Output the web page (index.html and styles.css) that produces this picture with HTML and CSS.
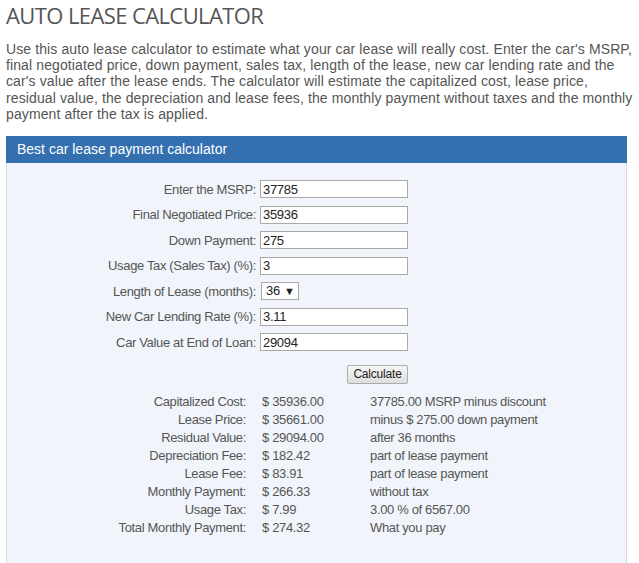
FILE: index.html
```html
<!DOCTYPE html>
<html lang="en">
<head>
    <meta charset="UTF-8">
    <title>Auto Lease Calculator</title>
    <link rel="stylesheet" href="styles.css">
</head>
<body>
    <h1 class="title">AUTO LEASE CALCULATOR</h1>
    <p class="intro">Use this auto lease calculator to estimate what your car lease will really cost. Enter the car's MSRP, final negotiated price, down payment, sales tax, length of the lease, new car lending rate and the car's value after the lease ends. The calculator will estimate the capitalized cost, lease price, residual value, the depreciation and lease fees, the monthly payment without taxes and the monthly payment after the tax is applied.</p>

    <div class="panel">
        <div class="panel-head">Best car lease payment calculator</div>
        <div class="panel-body">
            <div class="form">
                <label for="msrp">Enter the MSRP:</label>
                <input type="text" id="msrp" value="37785">
                <label for="price">Final Negotiated Price:</label>
                <input type="text" id="price" value="35936">
                <label for="down">Down Payment:</label>
                <input type="text" id="down" value="275">
                <label for="tax">Usage Tax (Sales Tax) (%):</label>
                <input type="text" id="tax" value="3">
                <label for="months">Length of Lease (months):</label>
                <div><span class="select" id="months">36 <span class="arrow">&#9660;</span></span></div>
                <label for="rate">New Car Lending Rate (%):</label>
                <input type="text" id="rate" value="3.11">
                <label for="residual">Car Value at End of Loan:</label>
                <input type="text" id="residual" value="29094">
                <div></div>
                <div class="btn-row"><button class="calc-btn">Calculate</button></div>
            </div>

            <div class="results">
                <span class="r-label">Capitalized Cost:</span><span>$ 35936.00</span><span>37785.00 MSRP minus discount</span>
                <span class="r-label">Lease Price:</span><span>$ 35661.00</span><span>minus $ 275.00 down payment</span>
                <span class="r-label">Residual Value:</span><span>$ 29094.00</span><span>after 36 months</span>
                <span class="r-label">Depreciation Fee:</span><span>$ 182.42</span><span>part of lease payment</span>
                <span class="r-label">Lease Fee:</span><span>$ 83.91</span><span>part of lease payment</span>
                <span class="r-label">Monthly Payment:</span><span>$ 266.33</span><span>without tax</span>
                <span class="r-label">Usage Tax:</span><span>$ 7.99</span><span>3.00 % of 6567.00</span>
                <span class="r-label">Total Monthly Payment:</span><span>$ 274.32</span><span>What you pay</span>
            </div>
        </div>
    </div>
</body>
</html>
```

FILE: styles.css
```css
body {
    margin: 0;
    padding: 0 6px;
    font-family: "Liberation Sans", Arial, sans-serif;
    color: #555;
    background-color: white;
}
.title {
    margin: 0;
    font-family: "Open Sans", sans-serif;
    font-weight: normal;
    font-size: 22px;
    letter-spacing: -0.6px;
    line-height: 30px;
    color: #555;
}
.intro {
    margin: 11px 0 0 0;
    font-size: 14px;
    line-height: 16.2px;
    letter-spacing: 0.11px;
}
.panel {
    margin-top: 14px;
    width: 621px;
    border: 1px solid #d3deea;
    border-top: none;
    background-color: #f1f5fb;
    height: 440px;
    box-sizing: border-box;
}
.panel-head {
    background-color: #3470b0;
    color: white;
    font-size: 14px;
    height: 27px;
    line-height: 27px;
    padding-left: 11px;
    margin: 0 -1px;
}
.panel-body {
    padding-top: 17px;
    font-size: 13px;
    letter-spacing: -0.35px;
}
.form {
    display: grid;
    grid-template-columns: 249px 148px;
    column-gap: 4px;
    row-gap: 7.5px;
    align-items: center;
}
.form label {
    text-align: right;
}
.form input {
    width: 148px;
    height: 18px;
    box-sizing: border-box;
    border: 1px solid #a9a9a9;
    font-family: "Liberation Sans", Arial, sans-serif;
    font-size: 13px;
    letter-spacing: -0.3px;
    color: #222;
    padding: 0 2px;
    margin: 0;
    background: white;
}
.select {
    display: inline-block;
    height: 16px;
    line-height: 16px;
    border: 1px solid #a9a9a9;
    background: white;
    padding: 0 3px 0 4px;
    color: #222;
    font-size: 13px;
    margin-left: 1px;
}
.arrow {
    font-size: 11px;
    margin-left: 1px;
}
.btn-row {
    text-align: right;
    padding-top: 6px;
}
.calc-btn {
    height: 19px;
    width: 61px;
    padding: 0;
    font-family: "Liberation Sans", Arial, sans-serif;
    font-size: 12px;
    letter-spacing: -0.2px;
    color: #222;
    border: 1px solid #adadad;
    border-radius: 2px;
    background: linear-gradient(#f6f6f6, #dedede);
}
.results {
    display: grid;
    grid-template-columns: 239px 108px auto;
    margin-top: 9px;
    line-height: 18px;
}
.results span:nth-child(3n+2) {
    padding-left: 16px;
}
.results span:nth-child(3n) {
    padding-left: 16px;
}
.r-label {
    text-align: right;
}
```
